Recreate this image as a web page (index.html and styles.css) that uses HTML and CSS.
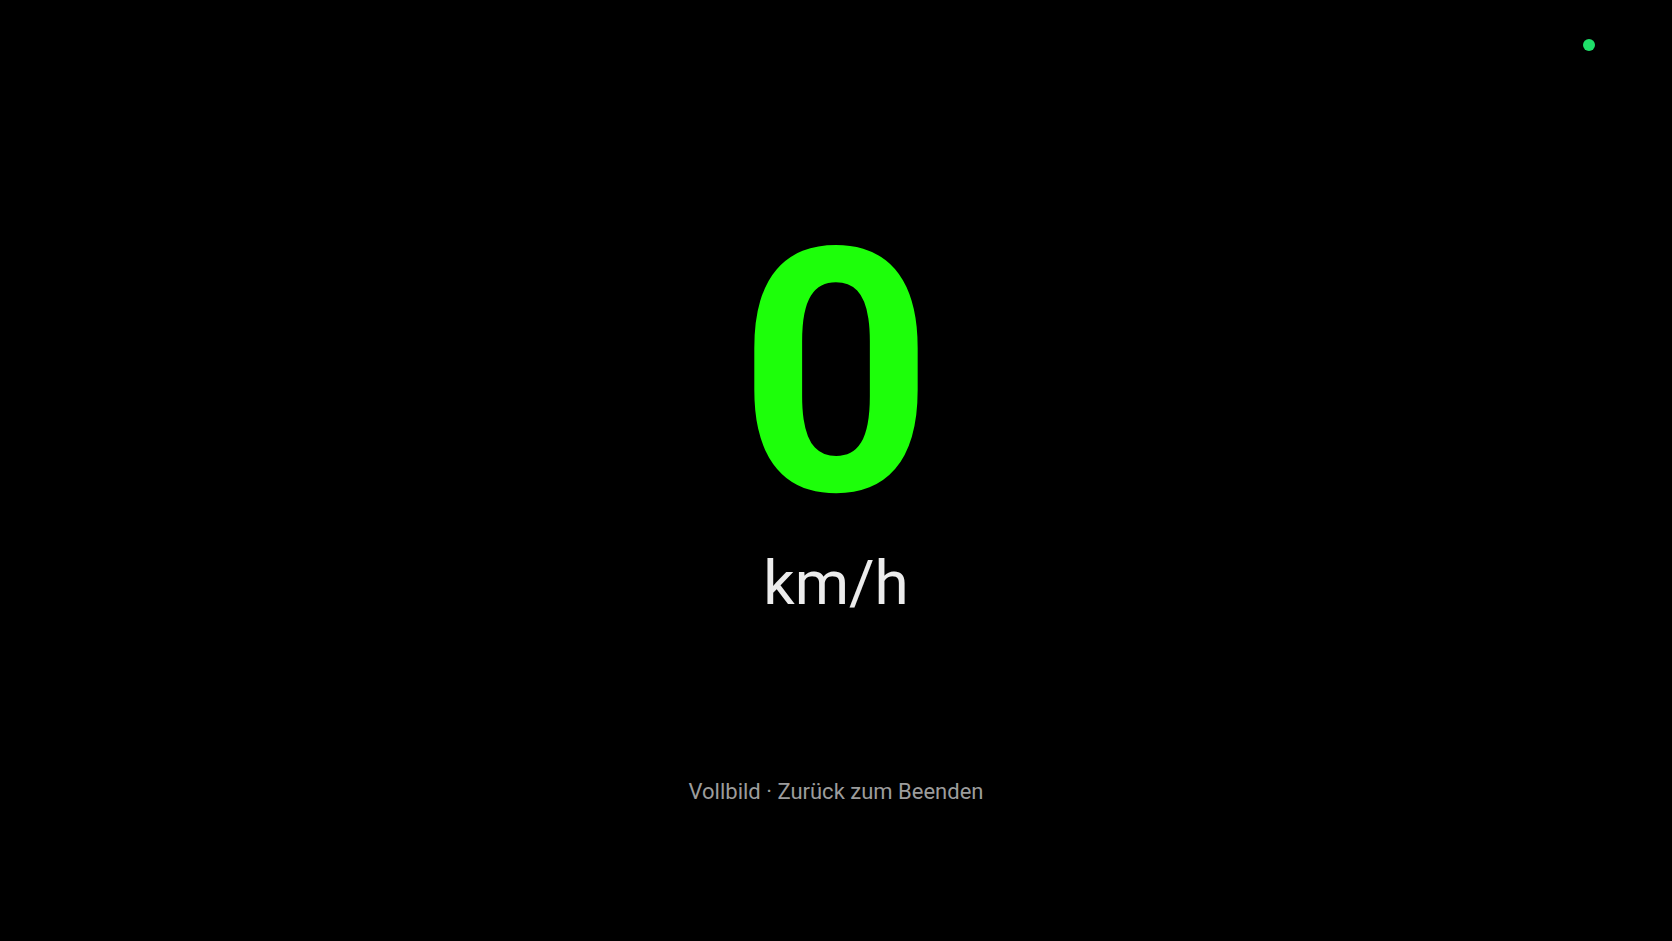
FILE: index.html
```html
<!DOCTYPE html>
<html lang="de">
<head>
<meta charset="utf-8">
<title>Tacho</title>
<link rel="stylesheet" href="styles.css">
</head>
<body>
<main class="screen">
  <span class="status-dot" aria-label="GPS aktiv"></span>
  <section class="speed">
    <div class="speed-value">0</div>
    <div class="speed-unit">km/h</div>
  </section>
  <p class="hint">Vollbild · Zurück zum Beenden</p>
</main>
</body>
</html>
```
FILE: styles.css
```css
html, body {
  margin: 0;
  padding: 0;
  background: #000;
}
.screen {
  position: relative;
  height: 100vh;
  display: flex;
  flex-direction: column;
  align-items: center;
  font-family: Roboto, "Noto Sans", sans-serif;
  padding-top: 238px;
  box-sizing: border-box;
}
.status-dot {
  position: absolute;
  top: 39px;
  left: 1583px;
  width: 12px;
  height: 12px;
  border-radius: 50%;
  background: #1fe06a;
}
.speed {
  display: flex;
  flex-direction: column;
  align-items: center;
}
.speed-value {
  font-size: 340px;
  font-weight: 700;
  line-height: 0.8;
  color: #1dff0a;
}
.speed-unit {
  margin-top: 42px;
  font-size: 62px;
  font-weight: 400;
  line-height: 1;
  color: #ececec;
}
.hint {
  margin: 167px 0 0;
  font-size: 22px;
  line-height: 1;
  color: #9c9c9c;
}
```
